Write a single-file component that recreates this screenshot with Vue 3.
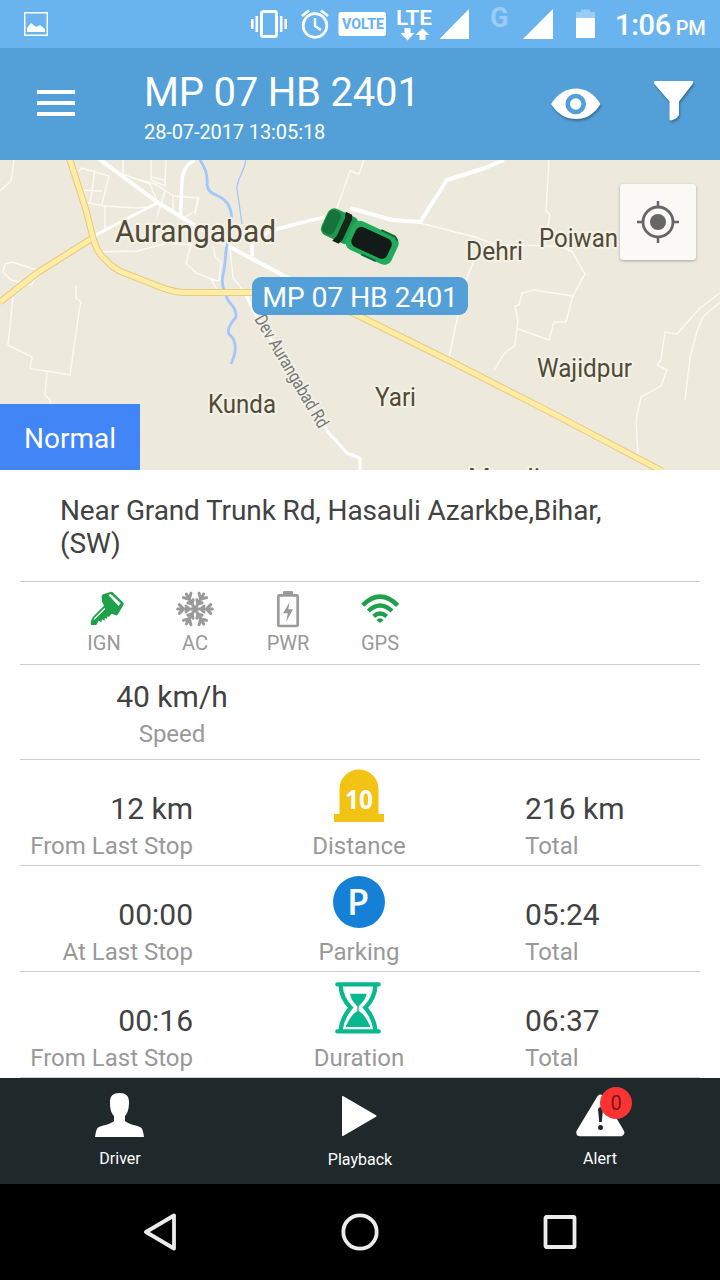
<template>
  <div class="screen">
    <div class="status-bar">
      <svg class="picture" width="24" height="24" viewBox="0 0 24 24">
        <rect x="0.75" y="0.75" width="22.5" height="22.5" fill="none" stroke="#fff" stroke-width="1.5" />
        <path d="M3 20V16l4-5 5 4 4-2 5 4v3z" fill="#fff" />
      </svg>
      <div class="status-icons">
        <svg width="48" height="48" viewBox="246 0 48 48">
          <rect x="261.5" y="11.5" width="15" height="25" rx="2" fill="none" stroke="#fff" stroke-width="3" />
          <path d="M252.3 19v10M256.8 16v16M281.2 16v16M285.7 19v10" stroke="#fff" stroke-width="2.6" />
        </svg>
        <svg width="40" height="48" viewBox="294 0 40 48" fill="none" stroke="#fff">
          <circle cx="315" cy="25.5" r="11.8" stroke-width="2.7" />
          <path d="M315 18v8l6 4" stroke-width="2.4" />
          <path d="M302 16l7-5.5M328 16l-7-5.5" stroke-width="2.7" />
        </svg>
        <svg width="57" height="48" viewBox="334 0 57 48">
          <rect x="338.5" y="12" width="47.5" height="24" rx="2.5" fill="#fff" />
          <text x="342" y="29" class="volte" textLength="42" lengthAdjust="spacingAndGlyphs">VOLTE</text>
        </svg>
        <svg width="45" height="48" viewBox="391 0 45 48">
          <text x="396" y="25" class="lte" textLength="36" lengthAdjust="spacingAndGlyphs">LTE</text>
          <path d="M404.500 28h6v5h4l-7 7.500-7-7.500h4zM419.500 40h6v-5h4l-7-6.500-7 6.500h4z" fill="#fff" />
        </svg>
        <svg width="38" height="48" viewBox="436 0 38 48"><path d="M439.500 39h29.500V9z" fill="#fff" /></svg>
        <svg width="42" height="48" viewBox="474 0 42 48">
          <text x="490" y="27" class="gsm">G</text>
        </svg>
        <svg width="44" height="48" viewBox="516 0 44 48"><path d="M523 39h30V9z" fill="#fff" /></svg>
        <svg width="44" height="48" viewBox="560 0 44 48">
          <path d="M576 19v-7h5V9.500h9V12h5v7z" fill="#9bccf3" />
          <path d="M576 18h19v20h-19z" fill="#fff" />
        </svg>
      </div>
      <div class="clock">1:06 <small>PM</small></div>
    </div>

    <header class="toolbar">
      <svg class="menu" width="38" height="26" viewBox="0 0 38 26">
        <path d="M0 2h38M0 13h38M0 24h38" stroke="#fff" stroke-width="4" />
      </svg>
      <div class="heading">
        <h1>{{ vehicle }}</h1>
        <p>28-07-2017 13:05:18</p>
      </div>
      <svg class="eye" width="50" height="32" viewBox="0 0 50 32">
        <path d="M0 16C7 5 16 0.500 25 0.500S43 5 49.500 16C43 27 34 31 25 31S7 27 0 16z" fill="#fff" />
        <circle cx="24.700" cy="16" r="8" fill="#fff" stroke="#539fd8" stroke-width="4.600" />
      </svg>
      <svg class="filter" width="40" height="40" viewBox="0 0 40 40">
        <path d="M1 0h37.500q1.500 0.500 0 3L25 20.500V34q-2 4-8 5.500-1.500 0-1.500-1V20.500L0.500 3Q-0.500 0.500 1 0z" fill="#fff" />
      </svg>
    </header>

    <section class="map">
      <svg class="map-canvas" width="720" height="310" viewBox="0 160 720 310">
        <rect y="160" width="720" height="310" fill="#edeadd" />
        <g class="lane">
          <path v-for="d in lanes" :key="d" :d="d" />
        </g>
        <g class="street">
          <path v-for="s in streets" :key="s.d" :d="s.d" :stroke-width="s.width" />
        </g>
        <g class="river">
          <path d="M200 160C205 168 208 174 207 185C209 198 222 192 229 206C234 216 230 224 230 235C224 248 227 258 223 275C221 285 224 292 227 298C229 304 237 307 236 317C230 324 227 330 229 334C236 340 238 349 231 364" stroke-width="2.800" />
          <path d="M245.500 160C246 169 236 180 237 189L242 224" stroke-width="1.300" />
        </g>
        <g fill="none" stroke-linejoin="round">
          <path v-for="d in highways" :key="'e' + d" :d="d" stroke="#e8cb82" stroke-width="7" />
          <path v-for="d in highways" :key="d" :d="d" stroke="#ffeda5" stroke-width="4.800" />
        </g>
        <g class="places">
          <text v-for="p in places" :key="p.name" :x="p.x" :y="p.y" :font-size="p.size" :textLength="p.width" lengthAdjust="spacingAndGlyphs">{{ p.name }}</text>
          <text class="road-name" transform="translate(254 319) rotate(59.500)" textLength="128" lengthAdjust="spacingAndGlyphs">Dev Aurangabad Rd</text>
        </g>
        <g transform="translate(358.500 236.500) rotate(25)">
          <rect x="-38" y="-16" width="33" height="29" rx="7" fill="#1d9a50" />
          <rect x="-37" y="-14" width="13" height="25" rx="5" fill="#16733c" />
          <path d="M-22-17h7l2 4v23l-2 5h-7l2-6v-20z" fill="#14251a" />
          <rect x="-10" y="-15.500" width="50" height="31" rx="8" fill="#20aa59" />
          <path d="M18-15.500h15l4 3M10 15h16" stroke="#12663a" stroke-width="2" fill="none" />
          <rect x="-5" y="-10.500" width="39" height="21.500" rx="6" fill="#121b17" />
        </g>
      </svg>
      <span class="marker-label">{{ vehicle }}</span>
      <button class="locate">
        <svg width="42" height="42" viewBox="0 0 42 42" fill="none" stroke="#666">
          <circle cx="21" cy="21" r="15" stroke-width="2.800" />
          <circle cx="21" cy="21" r="8" fill="#666" stroke="none" />
          <path d="M21 0v6M21 36v6M0 21h6M36 21h6" stroke-width="2.500" />
        </svg>
      </button>
      <span class="map-type">Normal</span>
    </section>

    <section class="details">
      <p class="address">Near Grand Trunk Rd, Hasauli Azarkbe,Bihar,<br />(SW)</p>

      <div class="sensors">
        <div class="sensor">
          <svg width="40" height="38" viewBox="43 23 120 114">
            <path d="M96 42Q97 35 103 35L122 29Q128 27 132 33L160 60Q164 65 160 70L145 96Q141 101 137 98L126 94 118 104 114 101 112 110 106 106 104 115 97 111 95 120 87 115 80 128H64L63 118 70 103 103 70Q95 60 96 42z" fill="#1fa14b" />
            <path d="M116 38l7-3 30 28-6 8zM73 108l31-31 3 3-33 32z" fill="#fff" />
          </svg>
          <span>IGN</span>
        </div>
        <div class="sensor ac">
          <svg width="40" height="38" viewBox="-60 -57 120 114" fill="none" stroke="#9a9a9a" stroke-width="9" stroke-linecap="round">
            <g v-for="n in 6" :key="n" :transform="`rotate(${n * 60})`">
              <path d="M0 0H52M34 0L47-13M34 0L47 13M17 0L27-9M17 0L27 9" />
            </g>
          </svg>
          <span>AC</span>
        </div>
        <div class="sensor">
          <svg width="40" height="38" viewBox="594 29 120 114">
            <path d="M639 42v-6q0-4 5-4h20q5 0 5 4v6z" fill="#9a9a9a" />
            <rect x="625" y="45" width="58" height="92" rx="3" fill="none" stroke="#9a9a9a" stroke-width="8" />
            <path d="M659 65L639 99h14l-4 25 20-37h-14z" fill="#9a9a9a" />
          </svg>
          <span>PWR</span>
        </div>
        <div class="sensor">
          <svg width="40" height="38" viewBox="870 29 120 114" fill="none" stroke="#1fa14b" stroke-width="13">
            <path d="M878 75Q930 23 983 75M895 92Q930 59 966 92M911 108Q930 91 950 108" />
            <path d="M919 119q11-11 22 0l-11 9z" fill="#1fa14b" stroke="none" />
          </svg>
          <span>GPS</span>
        </div>
      </div>

      <div class="speed">
        <strong>40 km/h</strong>
        <span>Speed</span>
      </div>

      <div v-for="row in rows" :key="row.name" class="row">
        <div class="cell left">
          <strong>{{ row.last }}</strong>
          <span>{{ row.lastLabel }}</span>
        </div>
        <div class="cell middle">
          <svg v-if="row.name === 'Distance'" width="52" height="54" viewBox="0 0 52 54">
            <path d="M6.500 45V20a19.500 19.500 0 0 1 39 0v25H51v8H1V45z" fill="#f3c314" />
            <text x="12" y="39.500" class="stone" textLength="28" lengthAdjust="spacingAndGlyphs">10</text>
          </svg>
          <svg v-else-if="row.name === 'Parking'" width="52" height="54" viewBox="0 0 52 54">
            <circle cx="26" cy="27" r="26" fill="#1481d6" />
            <text x="14" y="39.500" class="park">P</text>
          </svg>
          <svg v-else width="52" height="54" viewBox="160 664 156 162">
            <g fill="none" stroke="#0ab890" stroke-linecap="round">
              <path d="M173 674H297M173 815H297" stroke-width="13" />
              <path d="M183 678Q184 715 213 744Q187 774 183 810M287 678Q286 715 257 744Q283 774 287 810" stroke-width="13" />
            </g>
            <path d="M211 702h50q-3 18-24 38v14q17 8 34 44v4h-72v-4q17-35 34-44v-14q-19-18-22-38z" fill="#0ab890" />
          </svg>
          <span>{{ row.name }}</span>
        </div>
        <div class="cell">
          <strong>{{ row.total }}</strong>
          <span>Total</span>
        </div>
      </div>
    </section>

    <nav class="tabs">
      <div class="tab">
        <svg width="50" height="44" viewBox="0 0 50 44">
          <path d="M24.500 0C31 0 34 3 34 9C34 17 32 21 30 23V28C34 32 43 32 46.500 35Q48 37 49 44H0Q1 37 2.500 35C6 32 15 32 19 28V23C16 20 15 16 15 9C15 3 18 0 24.500 0z" fill="#fff" />
        </svg>
        <span>Driver</span>
      </div>
      <div class="tab playback">
        <svg width="38" height="44" viewBox="0 0 38 44">
          <path d="M2 4L34.500 23 2 42z" fill="#fff" stroke="#fff" stroke-width="2" stroke-linejoin="round" />
        </svg>
        <span>Playback</span>
      </div>
      <div class="tab">
        <div class="alert-icon">
          <svg width="50" height="44" viewBox="0 0 50 44">
            <path d="M25.500 5.500L45.500 39.500H5z" fill="#fff" stroke="#fff" stroke-width="7.500" stroke-linejoin="round" />
            <path d="M23 16q2.500-4 5 0L26.800 29h-2.600z" fill="#1f292c" />
            <circle cx="25.500" cy="34.500" r="2.500" fill="#1f292c" />
          </svg>
          <b class="badge">0</b>
        </div>
        <span>Alert</span>
      </div>
    </nav>

    <footer class="system-nav">
      <svg width="36" height="40" viewBox="0 0 36 40"><path d="M2 20L30 3.500v33z" /></svg>
      <svg width="40" height="40" viewBox="0 0 40 40"><circle cx="19" cy="20" r="16.700" /></svg>
      <svg width="36" height="40" viewBox="0 0 36 40"><rect x="3.500" y="5" width="29" height="30" rx="1" /></svg>
    </footer>
  </div>
</template>

<script setup>
const vehicle = "MP 07 HB 2401";

const rows = [
  { name: "Distance", last: "12 km", lastLabel: "From Last Stop", total: "216 km" },
  { name: "Parking", last: "00:00", lastLabel: "At Last Stop", total: "05:24" },
  { name: "Duration", last: "00:16", lastLabel: "From Last Stop", total: "06:37" },
];

const places = [
  { name: "Aurangabad", x: 115, y: 242, size: 32, width: 161 },
  { name: "Dehri", x: 466, y: 260, size: 26, width: 57 },
  { name: "Poiwan", x: 539, y: 247, size: 26, width: 79 },
  { name: "Wajidpur", x: 537, y: 377, size: 26, width: 95 },
  { name: "Kunda", x: 208, y: 413, size: 26, width: 68 },
  { name: "Yari", x: 375, y: 406, size: 26, width: 41 },
  // runs off the bottom edge of the map
  { name: "Mundi", x: 468, y: 487, size: 26, width: 72 },
];

const highways = [
  "M0 302L37 273L91 239",
  "M69 157L86 210L93 238Q97 252 103 257Q112 268 122 272L150 283Q168 291 182 292.500H290Q310 293 357 315L450 361L550 412L662 471",
];

const streets = [
  { d: "M98 158L157 202L183 218L230 247L290 279", width: 4 },
  { d: "M92 237L157 203", width: 3 },
  { d: "M195 160Q183 166 182 180L180.500 215", width: 3.5 },
  { d: "M252 256V242L270 231L300 223L325 217", width: 3.5 },
  { d: "M350 208L392 220L420 222L447 180L485 168L504 160", width: 4 },
  { d: "M246 295L254 312L328 432L347 453L360 458V470", width: 3 },
];

const lanes = [
  "M14 160L11 181L0 191",
  "M123 160V173",
  "M151 160V180L165 186L166 160M151 177L165 180",
  "M79 171L82 168L109 176L102 204M95 170L90 203M77 190L102 191M120 173L150 184L157 201M133 178L155 184L174 196L199 198L195 211L184 218M88 203L105 206L137 208L151 207",
  "M105 207V229M173 196V210M165 191L157 217M198 199L195 215M98 252L137 251L168 243L191 245L186 263L196 273L217 281M213 246L215 257L221 262L219 281L211 280L220 294M230 248L233 278L250 298",
  "M3 272L5 264L12 262L37 270L32 285L11 280L3 272M13 297L8 345L32 357L30 369L47 371L70 375L79 312L81 302L76 298V285M47 371L45 395L50 400L52 410",
  "M364 160L359 174L350 171L336 211M420 223L475 237L497 245L560 246L573 252M549 160L546 210L550 215L545 244M571 250L585 274L573 296M573 296L534 290L522 293L519 305L515 306L518 320L515 345L504 354L500 360L494 371M573 296L566 322L554 322L549 340L518 329",
  "M475 258L465 283L449 357M720 293L700 308L677 334L665 332L661 360L657 365L667 370L661 386L641 397L636 420L638 455M720 302L704 316L698 328L690 358L685 400M350 455L360 459L361 470",
];
</script>

<style>
body {
  margin: 0;
}
</style>

<style scoped>
.screen {
  width: 720px;
  height: 1280px;
  overflow: hidden;
  display: flex;
  flex-direction: column;
  background: #fff;
  font-family: Roboto, "Liberation Sans", sans-serif;
}

svg {
  display: block;
  flex: none;
}

.status-bar {
  display: flex;
  align-items: center;
  height: 48px;
  background: #69b4ee;
}

.picture {
  margin-left: 24px;
}

.status-icons {
  display: flex;
  margin-left: 198px;
}

.volte {
  font-size: 15px;
  font-weight: 800;
  fill: #69b4ee;
}

.lte {
  font-size: 21px;
  font-weight: 600;
  fill: #fff;
}

.gsm {
  font-size: 27px;
  font-weight: 700;
  fill: #9bccf3;
}

.clock {
  padding: 2px 0 0 11px;
  color: #fff;
  font-size: 29px;
  font-weight: 500;
  letter-spacing: -0.3px;
  white-space: nowrap;
}

.clock small {
  margin-left: -2px;
  font-size: 20px;
}

.toolbar {
  display: flex;
  height: 112px;
  background: #539fd8;
  color: #fff;
}

.menu {
  margin: 42px 69px 0 37px;
}

.heading {
  width: 407px;
  padding-top: 21px;
}

.heading h1 {
  margin: 0;
  font-size: 40px;
  font-weight: 400;
  line-height: 48px;
  letter-spacing: -0.2px;
}

.heading p {
  margin: 3px 0 0;
  font-size: 20px;
  line-height: 24px;
  letter-spacing: -0.1px;
}

.eye {
  margin-top: 40px;
  filter: drop-shadow(1px 2px 1px rgba(0, 0, 0, 0.3));
}

.filter {
  margin: 33px 0 0 53px;
  filter: drop-shadow(1px 2px 1px rgba(0, 0, 0, 0.3));
}

.map {
  position: relative;
  height: 310px;
  overflow: hidden;
}

.lane {
  fill: none;
  stroke: #fbfaf5;
  stroke-width: 1.4;
}

.street {
  fill: none;
  stroke: #fff;
  stroke-linejoin: round;
}

.river {
  fill: none;
  stroke: #a3c7fc;
}

.places {
  fill: #514a36;
  stroke: #f4f1e6;
  stroke-width: 4px;
  stroke-linejoin: round;
  paint-order: stroke;
}

.places .road-name {
  font-size: 18px;
  fill: #777;
}

.marker-label {
  position: absolute;
  left: 252px;
  top: 117px;
  width: 216px;
  height: 38px;
  line-height: 41px;
  border-radius: 9px;
  background: #539fd8;
  color: #fff;
  font-size: 28.5px;
  letter-spacing: -0.2px;
  text-align: center;
  white-space: nowrap;
}

.locate {
  position: absolute;
  left: 620px;
  top: 24px;
  display: flex;
  align-items: center;
  justify-content: center;
  width: 76px;
  height: 76px;
  padding: 0;
  border: none;
  border-radius: 3px;
  background: #faf9f6;
  box-shadow: 0 1px 3px rgba(0, 0, 0, 0.3);
}

.map-type {
  position: absolute;
  left: 0;
  bottom: 0;
  width: 140px;
  height: 66px;
  line-height: 69px;
  background: #4285f6;
  color: #fff;
  font-size: 28px;
  text-align: center;
}

.details {
  height: 608px;
  padding: 0 20px;
}

.details > * {
  box-sizing: border-box;
  border-bottom: 1px solid #ccc;
}

.address {
  height: 112px;
  margin: 0;
  padding: 24px 0 0 40px;
  color: #424242;
  font-size: 28px;
  line-height: 33px;
  letter-spacing: -0.12px;
}

.sensors {
  display: flex;
  height: 83px;
  padding: 8px 0 0 38px;
}

.sensor {
  display: flex;
  flex-direction: column;
  align-items: center;
  width: 92px;
}

.sensor span {
  margin-top: 3px;
  color: #999;
  font-size: 20px;
  line-height: 24px;
}

.ac {
  box-sizing: border-box;
  padding-right: 2px;
}

.speed {
  height: 95px;
  padding: 14px 376px 0 0;
  text-align: center;
}

.row {
  display: grid;
  grid-template-columns: 173px 332px 1fr;
  height: 106px;
}

.cell {
  padding-top: 31px;
}

.left {
  text-align: right;
}

.middle {
  display: flex;
  flex-direction: column;
  align-items: center;
  padding-top: 9px;
}

.speed strong,
.cell strong {
  display: block;
  color: #424242;
  font-size: 30px;
  font-weight: 400;
  line-height: 36px;
}

.speed span,
.cell span {
  display: block;
  margin-top: 5px;
  color: #999;
  font-size: 24px;
  line-height: 28px;
  white-space: nowrap;
}

.middle span {
  margin-top: 9px;
}

.stone {
  font-family: "Open Sans", "Noto Sans", sans-serif;
  font-size: 27px;
  font-weight: 700;
  fill: #fff;
}

.park {
  font-family: "Open Sans", "Noto Sans", sans-serif;
  font-size: 36px;
  font-weight: 600;
  fill: #fff;
}

.tabs {
  display: grid;
  grid-template-columns: repeat(3, 1fr);
  height: 106px;
  background: #1f292c;
}

.tab {
  display: flex;
  flex-direction: column;
  align-items: center;
  padding-top: 15px;
  color: #fff;
  font-size: 16px;
  line-height: 20px;
}

.tab > span {
  margin-top: 12px;
}

.playback > span {
  margin-top: 13px;
}

.alert-icon {
  position: relative;
}

.badge {
  position: absolute;
  left: 25px;
  top: -6px;
  width: 32px;
  height: 32px;
  border-radius: 50%;
  background: #fb3433;
  color: #7c1518;
  font-size: 20px;
  font-weight: 400;
  line-height: 33px;
  text-align: center;
}

.system-nav {
  display: flex;
  align-items: center;
  justify-content: space-between;
  height: 96px;
  padding: 0 142px 0 144px;
  background: #000;
  fill: none;
  stroke: #ececec;
  stroke-width: 3.8;
  stroke-linejoin: round;
}
</style>
